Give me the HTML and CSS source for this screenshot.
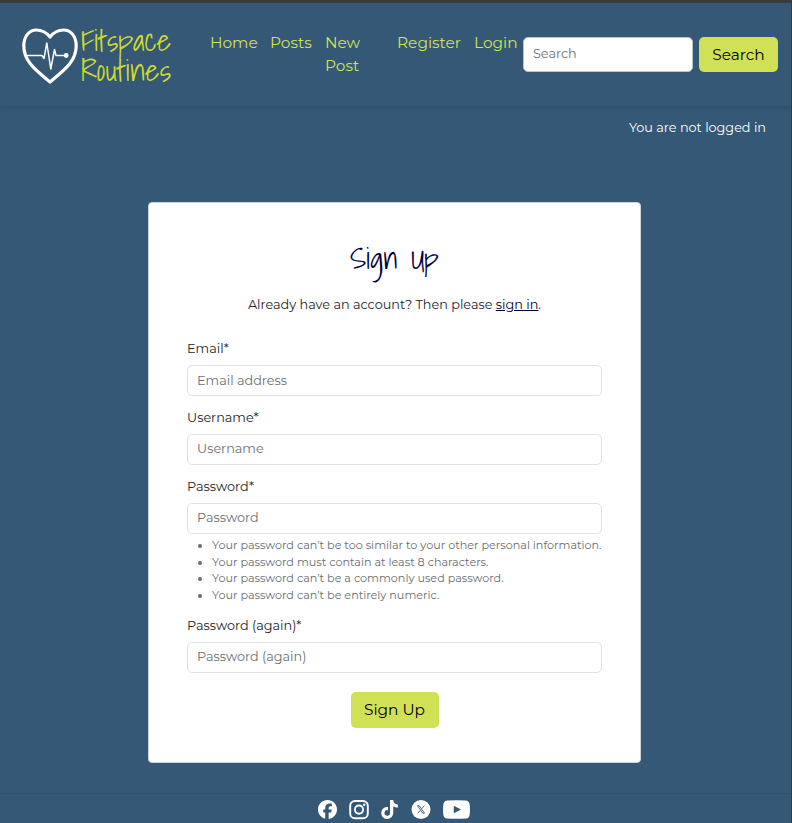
FILE: index.html
```html
<!DOCTYPE html>
<html lang="en">
<head>
<meta charset="utf-8">
<title>Fitspace Routines - Sign Up</title>
<link rel="stylesheet" href="styles.css">
</head>
<body>
<header class="site-header">
  <a class="brand">
    <svg class="brand-heart" width="56" height="58" viewBox="0 0 56 58" fill="none" stroke="#fff">
      <path d="M28 9C24 4 19 2 14.500 2C6.500 2 1.800 9 1.800 18C1.800 34 15 43 28 54C41 43 54.200 34 54.200 18C54.200 9 49.500 2 41.500 2C37 2 32 4 28 9Z" stroke-width="3.200" stroke-linejoin="round"/>
      <path d="M4 27.500H20L22 30.500L24.800 15L28.800 41L32.500 21.500L34 27.500H43" stroke-width="1.500" stroke-linejoin="round"/>
      <circle cx="44.200" cy="27.500" r="2.400" fill="#fff" stroke="none"/>
    </svg>
    <svg class="brand-name" width="94" height="66" viewBox="0 0 94 66">
      <text x="3" y="25" textLength="90" lengthAdjust="spacingAndGlyphs">Fitspace</text>
      <text x="3" y="55" textLength="90" lengthAdjust="spacingAndGlyphs">Routines</text>
    </svg>
  </a>
  <nav class="nav">
    <a class="home">Home</a>
    <a class="posts">Posts</a>
    <a class="new-post">New Post</a>
    <a class="register">Register</a>
    <a class="login">Login</a>
  </nav>
  <form class="search">
    <input class="field search-field" type="text" placeholder="Search">
    <button class="btn search-btn" type="button">Search</button>
  </form>
</header>
<p class="status">You are not logged in</p>
<main class="card">
  <h1 class="title">Sign Up</h1>
  <p class="intro">Already have an account? Then please <a class="link">sign in</a>.</p>
  <form class="form">
    <label>Email*</label>
    <input class="field email" type="text" placeholder="Email address">
    <label>Username*</label>
    <input class="field" type="text" placeholder="Username">
    <label>Password*</label>
    <input class="field with-help" type="text" placeholder="Password">
    <ul class="help">
      <li>Your password can’t be too similar to your other personal information.</li>
      <li>Your password must contain at least 8 characters.</li>
      <li>Your password can’t be a commonly used password.</li>
      <li>Your password can’t be entirely numeric.</li>
    </ul>
    <label>Password (again)*</label>
    <input class="field" type="text" placeholder="Password (again)">
    <button class="btn submit" type="button">Sign Up</button>
  </form>
</main>
<footer class="footer">
  <svg width="19" height="19" viewBox="0 0 512 512" fill="#fff"><path d="M512 256C512 114.600 397.400 0 256 0S0 114.600 0 256c0 120 82.700 220.800 194.200 248.500V334.200h-52.800V256h52.800v-33.700c0-87.100 39.400-127.500 125-127.500 16.200 0 44.200 3.200 55.700 6.400V172c-6-.6-16.500-1-29.600-1-42 0-58.200 15.900-58.200 57.200V256h83.600l-14.400 78.200h-69.300v175.900C413.800 494.800 512 386.900 512 256z"/></svg>
  <svg class="instagram" width="20" height="20" viewBox="0 0 20 20" fill="none" stroke="#fff" stroke-width="1.900"><rect x="1.200" y="1" width="17.600" height="17.200" rx="4.800"/><circle cx="10" cy="9.600" r="4.100"/><circle cx="15.200" cy="4.700" r="1.200" fill="#fff" stroke="none"/></svg>
  <svg class="tiktok" width="17" height="19" viewBox="0 0 448 512" fill="#fff"><path d="M448 209.900a210 210 0 0 1-122.800-39.200v178.700A162.600 162.600 0 1 1 185 188.300v89.900a74.600 74.600 0 1 0 52.200 71.200V0h88a121 121 0 0 0 1.900 22.200 122 122 0 0 0 53.900 80.200 121 121 0 0 0 67 20.100z"/></svg>
  <svg class="x" width="20" height="20" viewBox="0 0 20 20"><circle cx="10" cy="9.500" r="9.500" fill="#fff"/><path d="M6.500 5.800H8.300L13.500 13.200H11.700ZM13.200 5.800L10.600 8.800M9.300 10.300L6.700 13.300" fill="none" stroke="#345875" stroke-width=".9"/></svg>
  <svg class="youtube" width="27" height="19" viewBox="0 0 27 20" preserveAspectRatio="none"><path d="M4 .4Q13.500 0 23 .4Q26.500 1 26.700 5Q27.200 10 26.700 15Q26.500 19 23 19.600Q13.500 20 4 19.600Q.5 19 .3 15Q-.2 10 .3 5Q.5 1 4 .4Z" fill="#fff"/><path d="M10.800 6L18 10L10.800 14Z" fill="#345875"/></svg>
</footer>
</body>
</html>
```
FILE: styles.css
```css
* { box-sizing: border-box; }
body {
  margin: 0;
  height: 823px;
  overflow: hidden;
  display: flex;
  flex-direction: column;
  background: #345875;
  border-top: 3px solid #3c3c3c;
  border-right: 1px solid #263e50;
  font-family: Montserrat, Inter, sans-serif;
  font-size: 12.800px;
  color: #212529;
}
p, h1, ul { margin: 0; }
.site-header {
  display: flex;
  align-items: flex-start;
  height: 103px;
  flex: none;
  padding-left: 22px;
  box-shadow: 0 1px 4px rgba(30, 70, 90, .5);
}
.brand { display: flex; width: 188px; padding-top: 23px; }
.brand-heart { margin-top: 2px; }
.brand-name { overflow: visible; }
.brand-name text { font: 400 29px "Shadows Into Light", Lato, sans-serif; fill: #cdd92f; }
.nav {
  display: flex;
  width: 313px;
  padding-top: 28px;
  font-size: 15.360px;
  line-height: 23px;
  color: #d1e156;
}
.home { width: 60px; }
.posts { width: 55px; }
.new-post { width: 72px; padding-right: 20px; }
.register { width: 77px; }
.search { display: flex; gap: 6px; padding-top: 34px; }
.field {
  display: block;
  width: 100%;
  height: 31px;
  padding: 0 9px 2px;
  border: 1px solid #dee2e6;
  border-radius: 5px;
  background: #fff;
  font: 12.800px Montserrat, Inter, sans-serif;
  outline: none;
}
.field::placeholder { color: #6c7074; opacity: 1; }
.field.email { padding-bottom: 0; }
.search-field { width: 170px; height: 35px; border-color: #b9c5d3; }
.btn {
  height: 36px;
  padding: 0;
  border: 0;
  border-radius: 5px;
  background: #d1e156;
  color: #000;
  font: 15.360px Montserrat, Inter, sans-serif;
}
.search-btn { width: 79px; height: 35px; }
.status {
  margin-top: 12px;
  padding-right: 25px;
  line-height: 20px;
  text-align: right;
  color: #fff;
}
.card {
  width: 493px;
  height: 561px;
  flex: none;
  margin: 64px 0 0 148px;
  padding: 37px 38px 0;
  border: 1px solid #cdd3d8;
  border-radius: 4px;
  background: #fff;
}
.title {
  height: 55px;
  text-align: center;
  font: 400 29.700px/36px "Shadows Into Light", Lato, sans-serif;
  color: #000040;
}
.intro { line-height: 20px; text-align: center; }
.link { text-decoration: underline; color: #000030; }
.form { display: flex; flex-direction: column; align-items: flex-start; padding-top: 24px; }
.form label { height: 20px; line-height: 20px; margin-bottom: 6px; }
.form .field { margin-bottom: 12px; }
.form .with-help { margin-bottom: 3px; }
.help {
  padding-left: 25px;
  margin-bottom: 12px;
  font-size: 11.200px;
  line-height: 16.700px;
  color: #696d71;
  white-space: nowrap;
}
.submit { width: 88px; align-self: center; margin-top: 7px; }
.footer {
  display: flex;
  height: 30px;
  flex: none;
  margin-top: 30px;
  padding: 6px 0 0 318px;
  border-top: 1px solid #2f526e;
}
.instagram { margin-left: 12px; }
.tiktok { margin-left: 12px; }
.x { margin-left: 13px; }
.youtube { margin-left: 12px; }
```
